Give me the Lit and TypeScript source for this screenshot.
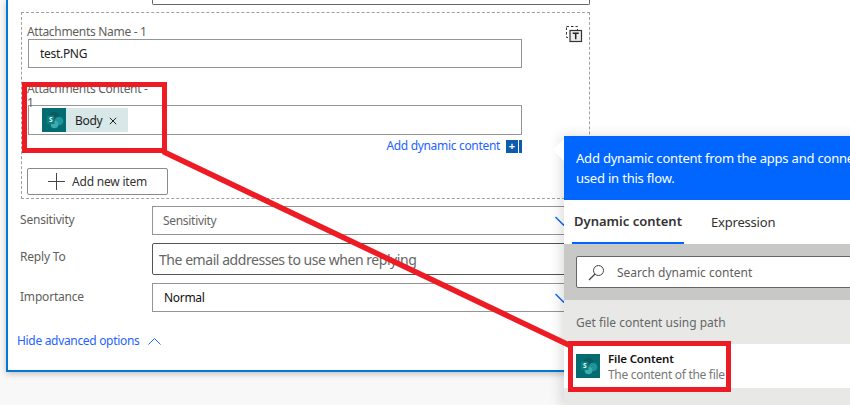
import { LitElement, html, css, svg } from "lit";
import { customElement } from "lit/decorators.js";

const spIcon = (cls: string) => html`<svg class=${cls} viewBox="0 0 24 24" aria-hidden="true">
  <rect width="24" height="24" fill="#036c70"/>
  <circle cx="12.5" cy="9" r="5.2" fill="#0a5c60"/>
  <circle cx="17" cy="13" r="4.3" fill="#1f9599"/>
  <circle cx="12.5" cy="16.5" r="3.8" fill="#3cabaf"/>
  <rect x="5" y="7.5" width="7.5" height="8.5" rx=".6" fill="#0d7f83"/>
  <text x="8.7" y="14" font-size="6.5" font-weight="700" text-anchor="middle" fill="#e8ffff" font-family="Noto Sans, sans-serif">S</text>
</svg>`;

@customElement("app-root")
export class AppRoot extends LitElement {
  static styles = css`
    :host {
      display: block;
      position: relative;
      width: 850px;
      height: 405px;
      overflow: hidden;
      background: #f8f8f8;
      font-family: "Noto Sans", "Open Sans", sans-serif;
      font-size: 12px;
      color: #333;
    }
    .card {
      box-sizing: border-box;
      margin-left: 6px;
      width: 860px;
      height: 372px;
      background: #fff;
      border-left: 2px solid #0078d4;
      border-bottom: 2px solid #0078d4;
      box-shadow: 0 2px 6px rgba(0, 0, 0, 0.22);
      display: flex;
      flex-direction: column;
    }
    .top-field {
      box-sizing: border-box;
      margin-left: 144px;
      width: 438px;
      height: 5px;
      border: 1px solid #666;
      border-top: 0;
      border-radius: 0 0 2px 2px;
      flex: none;
    }
    .array {
      box-sizing: border-box;
      margin: 7px 0 0 13px;
      width: 569px;
      height: 187px;
      border: 1px dashed #a0a0a0;
      padding: 12px 0 0 5px;
      position: relative;
      flex: none;
    }
    .flabel {
      font-size: 12px;
      line-height: 14px;
      letter-spacing: -0.3px;
      color: #605e5c;
      width: 125px;
    }
    .flabel.wide { width: 200px; }
    .input {
      box-sizing: border-box;
      margin-left: 1px;
      width: 494px;
      border: 1px solid #949494;
      display: flex;
      align-items: center;
      font-size: 12px;
      letter-spacing: -0.3px;
      color: #222;
      background: transparent;
    }
    .name-input { height: 29px; padding-left: 11px; }
    .content-label { margin-top: 14px; }
    .content-input { height: 30px; padding-left: 13px; margin-top: -5px; }
    .token {
      display: flex;
      align-items: center;
      height: 24px;
      width: 86px;
      background: #d8e7e8;
      color: #222;
      font-size: 12px;
    }
    .token-icon { width: 24px; height: 24px; flex: none; }
    .token span { margin-left: 9px; }
    .token svg.x { width: 8px; height: 8px; margin: 2px 0 0 7px; }
    .dyn-row {
      width: 495px;
      margin-top: 4px;
      height: 14px;
      display: flex;
      justify-content: flex-end;
      align-items: center;
      gap: 6px;
    }
    .link { color: #2563ff; font-size: 12px; line-height: 14px; letter-spacing: -0.32px; }
    .dyn-btn {
      width: 16px;
      height: 13px;
      background: #0b5cad;
      color: #fff;
      font-size: 11px;
      line-height: 12px;
      display: flex;
    }
    .dyn-btn b { width: 12px; text-align: center; font-weight: 700; }
    .dyn-btn i { width: 1px; background: #fff; }
    .add-item {
      box-sizing: border-box;
      margin-top: 15px;
      width: 141px;
      height: 27px;
      border: 1px solid #8a8a8a;
      border-radius: 2px;
      display: flex;
      align-items: center;
      padding-left: 20px;
      gap: 7px;
      font-size: 12px;
      letter-spacing: -0.2px;
      color: #333;
    }
    .add-item svg { width: 17px; height: 17px; }
    .copy-icon { position: absolute; left: 543px; top: 12px; width: 18px; height: 18px; }
    .row {
      display: grid;
      grid-template-columns: 132px 438px;
      margin-left: 12px;
      flex: none;
    }
    .row-label { font-size: 12px; line-height: 14px; color: #605e5c; letter-spacing: -0.2px; margin-top: 7px; }
    .sel {
      box-sizing: border-box;
      height: 29px;
      border: 1px solid #949494;
      display: flex;
      align-items: center;
      padding-left: 10px;
      position: relative;
      font-size: 12px;
      letter-spacing: -0.3px;
    }
    .sel svg { position: absolute; left: 402px; top: 9px; width: 16px; height: 10px; }
    .r1 { margin-top: 7px; }
    .r1 .sel { color: #666; }
    .r2 { margin-top: 8px; }
    .r2 .txt {
      box-sizing: border-box;
      height: 32px;
      border: 1px solid #555;
      border-radius: 2px;
      display: flex;
      align-items: center;
      padding-left: 6px;
      font-size: 14px;
      letter-spacing: -0.45px;
      color: #666;
    }
    .r3 { margin-top: 8px; }
    .r3 .sel { padding-left: 11px; color: #111; }
    .hide {
      margin: 22px 0 0 9px;
      display: flex;
      align-items: center;
      gap: 9px;
      height: 14px;
    }
    .hide svg { width: 13px; height: 8px; }
    .panel {
      position: absolute;
      left: 564px;
      top: 136px;
      width: 400px;
      height: 269px;
      background: #e8e9e7;
      box-shadow: -3px 0 12px rgba(0, 0, 0, 0.14);
      display: flex;
      flex-direction: column;
    }
    .caret {
      position: absolute;
      left: 552px;
      top: 139px;
      width: 12px;
      height: 22px;
      background: #fff;
      clip-path: polygon(100% 0, 0 50%, 100% 100%);
    }
    .banner {
      box-sizing: border-box;
      height: 64px;
      background: #0066ff;
      color: #fff;
      padding: 12px 0 0 12px;
      font-size: 13px;
      line-height: 20px;
      letter-spacing: -0.2px;
      white-space: nowrap;
    }
    .tabs {
      height: 44px;
      background: #fff;
      display: flex;
      box-sizing: border-box;
      padding-left: 8px;
    }
    .tab {
      box-sizing: border-box;
      height: 44px;
      display: flex;
      align-items: center;
      padding: 0 2px;
      font-size: 13px;
      color: #333;
    }
    .tab.on { font-weight: 600; width: 112px; justify-content: center; padding: 0; border-bottom: 2px solid #0066ff; }
    .tab.off { margin-left: 25px; letter-spacing: -0.2px; }
    .search-wrap {
      box-sizing: border-box;
      height: 56px;
      background: #c8c9c6;
      padding: 12px 0 0 12px;
    }
    .search {
      box-sizing: border-box;
      height: 32px;
      width: 380px;
      background: #fff;
      border: 1px solid #666;
      border-radius: 2px;
      display: flex;
      align-items: center;
      padding-left: 11px;
      gap: 12px;
      font-size: 12px;
      color: #605e5c;
    }
    .search svg { width: 17px; height: 17px; }
    .group { height: 44px; box-sizing: border-box; padding: 16px 0 0 12px; font-size: 12px; line-height: 14px; color: #666; }
    .item {
      height: 44px;
      background: #fff;
      display: flex;
      align-items: center;
      padding-left: 12px;
      gap: 8px;
    }
    .item-icon { width: 24px; height: 24px; flex: none; }
    .item-title { font-size: 11.5px; line-height: 17px; font-weight: 600; color: #111; letter-spacing: -0.15px; }
    .item-sub { font-size: 12px; line-height: 16px; color: #777; letter-spacing: -0.3px; }
    .overlay { position: absolute; left: 0; top: 0; width: 850px; height: 405px; pointer-events: none; }
  `;

  render() {
    return html`
      <div class="card">
        <div class="top-field"></div>
        <div class="array">
          <svg class="copy-icon" viewBox="0 0 18 18" aria-hidden="true">
            <rect x="1.5" y="1.5" width="11" height="11" fill="none" stroke="#333" stroke-dasharray="2.5 2"/>
            <rect x="5" y="5.5" width="11.5" height="11" fill="#ececec" stroke="#333" stroke-width="1.2"/>
            <path d="M7.7 8.2h6M10.7 8.2v6" fill="none" stroke="#222" stroke-width="1.5"/>
          </svg>
          <div class="flabel wide">Attachments Name - 1</div>
          <div class="input name-input">test.PNG</div>
          <div class="flabel content-label">Attachments Content - 1</div>
          <div class="input content-input">
            <div class="token">
              ${spIcon("token-icon")}
              <span>Body</span>
              <svg class="x" viewBox="0 0 8 8" aria-hidden="true"><path d="M.8.8l6.4 6.4M7.2.8L.8 7.2" stroke="#222" stroke-width="1"/></svg>
            </div>
          </div>
          <div class="dyn-row">
            <span class="link">Add dynamic content</span>
            <span class="dyn-btn"><b>+</b><i></i></span>
          </div>
          <div class="add-item">
            <svg viewBox="0 0 17 17" aria-hidden="true"><path d="M0 8.5h17M8.5 0v17" stroke="#444" stroke-width="1"/></svg>
            <span>Add new item</span>
          </div>
        </div>
        <div class="row r1">
          <div class="row-label">Sensitivity</div>
          <div class="sel">Sensitivity
            <svg viewBox="0 0 16 10" aria-hidden="true"><path d="M.5 1l8 8 6-6" fill="none" stroke="#0066ff" stroke-width="1.4"/></svg>
          </div>
        </div>
        <div class="row r2">
          <div class="row-label">Reply To</div>
          <div class="txt">The email addresses to use when replying</div>
        </div>
        <div class="row r3">
          <div class="row-label">Importance</div>
          <div class="sel">Normal
            <svg viewBox="0 0 16 10" aria-hidden="true"><path d="M.5 1l8 8 6-6" fill="none" stroke="#0066ff" stroke-width="1.4"/></svg>
          </div>
        </div>
        <div class="hide">
          <span class="link">Hide advanced options</span>
          <svg viewBox="0 0 13 8" aria-hidden="true"><path d="M.5 7.5l6-6 6 6" fill="none" stroke="#2563ff" stroke-width="1"/></svg>
        </div>
      </div>

      <div class="panel">
        <div class="banner">Add dynamic content from the apps and connectors<br />used in this flow.</div>
        <div class="tabs">
          <div class="tab on">Dynamic content</div>
          <div class="tab off">Expression</div>
        </div>
        <div class="search-wrap">
          <div class="search">
            <svg viewBox="0 0 17 17" aria-hidden="true"><circle cx="10.5" cy="6.5" r="5" fill="none" stroke="#444"/><path d="M7 10L1 16" stroke="#444" stroke-width="1.2"/></svg>
            <span>Search dynamic content</span>
          </div>
        </div>
        <div class="group">Get file content using path</div>
        <div class="item">
          ${spIcon("item-icon")}
          <div>
            <div class="item-title">File Content</div>
            <div class="item-sub">The content of the file</div>
          </div>
        </div>
      </div>
      <div class="caret"></div>

      <svg class="overlay" viewBox="0 0 850 405" aria-hidden="true">
        ${svg`
          <rect x="24.5" y="84.5" width="140" height="66" fill="none" stroke="#ed1c24" stroke-width="5"/>
          <rect x="570.5" y="343.5" width="158" height="46" fill="none" stroke="#ed1c24" stroke-width="5"/>
          <path d="M163 151.5L571 346" stroke="#ed1c24" stroke-width="5.5" fill="none"/>
        `}
      </svg>
    `;
  }
}
